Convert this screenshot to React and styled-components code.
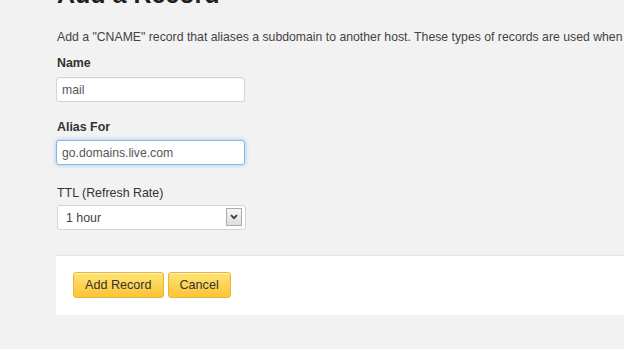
import React from 'react';
import styled, { createGlobalStyle } from 'styled-components';

const GlobalStyle = createGlobalStyle`
    html, body {
        margin: 0;
        padding: 0;
        background: #f2f2f2;
        overflow: hidden;
    }
    body {
        font-family: "Liberation Sans", Arial, sans-serif;
        color: #333;
    }
`;

export default function App() {
    return (
        <Page>
            <GlobalStyle />
            <Content>
                <Heading>Add a Record</Heading>
                <Intro>
                    Add a "CNAME" record that aliases a subdomain to another host. These types of records are used when you want to point a subdomain somewhere else.
                </Intro>

                <Field>
                    <Label $bold>Name</Label>
                    <TextInput defaultValue="mail" />
                </Field>

                <Field $gap={17}>
                    <Label $bold $space={5}>Alias For</Label>
                    <TextInput defaultValue="go.domains.live.com" $focused />
                </Field>

                <Field $gap={20}>
                    <Label $space={4}>TTL (Refresh Rate)</Label>
                    <SelectWrap>
                        <Select defaultValue="1h">
                            <option value="1h">1 hour</option>
                            <option value="1d">1 day</option>
                        </Select>
                        <ArrowBox>
                            <svg width="8" height="6" viewBox="0 0 8 6">
                                <path d="M1 1.2 L4 4.2 L7 1.2" fill="none" stroke="#3a3a3a" strokeWidth="1.8" />
                            </svg>
                        </ArrowBox>
                    </SelectWrap>
                </Field>
            </Content>

            <Actions>
                <Button>Add Record</Button>
                <Button>Cancel</Button>
            </Actions>
        </Page>
    );
}

const Page = styled.div`
    width: 624px;
    height: 349px;
    overflow: hidden;
    background: #f2f2f2;
    padding-left: 56px;
    box-sizing: border-box;
`;

const Content = styled.div`
    padding-left: 1px;
`;

const Heading = styled.h1`
    margin: -21px 0 0 0;
    font-size: 25px;
    line-height: 30px;
    font-weight: bold;
    color: #1e1e1e;
`;

const Intro = styled.p`
    margin: 19px 0 0 0;
    font-size: 12.25px;
    line-height: 18px;
    white-space: nowrap;
    color: #444;
`;

const Field = styled.div`
    display: flex;
    flex-direction: column;
    align-items: flex-start;
    margin-top: ${p => p.$gap ?? 9}px;
`;

const Label = styled.label`
    font-size: 12.4px;
    line-height: 16px;
    font-weight: ${p => (p.$bold ? 'bold' : 'normal')};
    color: #333;
    margin-bottom: ${p => p.$space ?? 6}px;
`;

const TextInput = styled.input`
    box-sizing: border-box;
    width: 189px;
    height: 25px;
    padding: 0 5px;
    margin-left: -1px;
    font-family: "Liberation Sans", Arial, sans-serif;
    font-size: 12.2px;
    color: #555;
    background: #fff;
    border: 1px solid ${p => (p.$focused ? '#86b6e8' : '#d4d4d4')};
    border-radius: 3px;
    box-shadow: ${p =>
        p.$focused
            ? '0 0 4px rgba(82, 160, 235, 0.55)'
            : 'inset 0 1px 1px rgba(0, 0, 0, 0.05)'};
    outline: none;
`;

const SelectWrap = styled.div`
    position: relative;
    width: 189px;
`;

const Select = styled.select`
    box-sizing: border-box;
    width: 189px;
    height: 25px;
    padding: 0 8px;
    font-family: "Liberation Sans", Arial, sans-serif;
    font-size: 12.4px;
    color: #444;
    background: #fff;
    border: 1px solid #d4d4d4;
    border-radius: 3px;
    appearance: none;
    -webkit-appearance: none;
    outline: none;
`;

const ArrowBox = styled.span`
    position: absolute;
    right: 4px;
    top: 3px;
    width: 16px;
    height: 18px;
    box-sizing: border-box;
    border: 1px solid #acacac;
    background: linear-gradient(#f6f6f6, #dedede);
    display: flex;
    align-items: center;
    justify-content: center;
    pointer-events: none;
`;

const Actions = styled.div`
    margin-top: 25px;
    height: 60px;
    box-sizing: border-box;
    background: #fff;
    border-top: 1px solid #e6e6e6;
    display: flex;
    align-items: flex-start;
    gap: 4px;
    padding: 16px 0 0 17px;
`;

const Button = styled.button`
    height: 26px;
    padding: 0 11px;
    font-family: "Liberation Sans", Arial, sans-serif;
    font-size: 12.6px;
    color: #333;
    background: linear-gradient(#ffe375, #fbc436);
    border: 1px solid #e8b43a;
    border-radius: 3px;
    box-shadow: inset 0 1px 0 rgba(255, 255, 255, 0.5);
    cursor: pointer;
`;
